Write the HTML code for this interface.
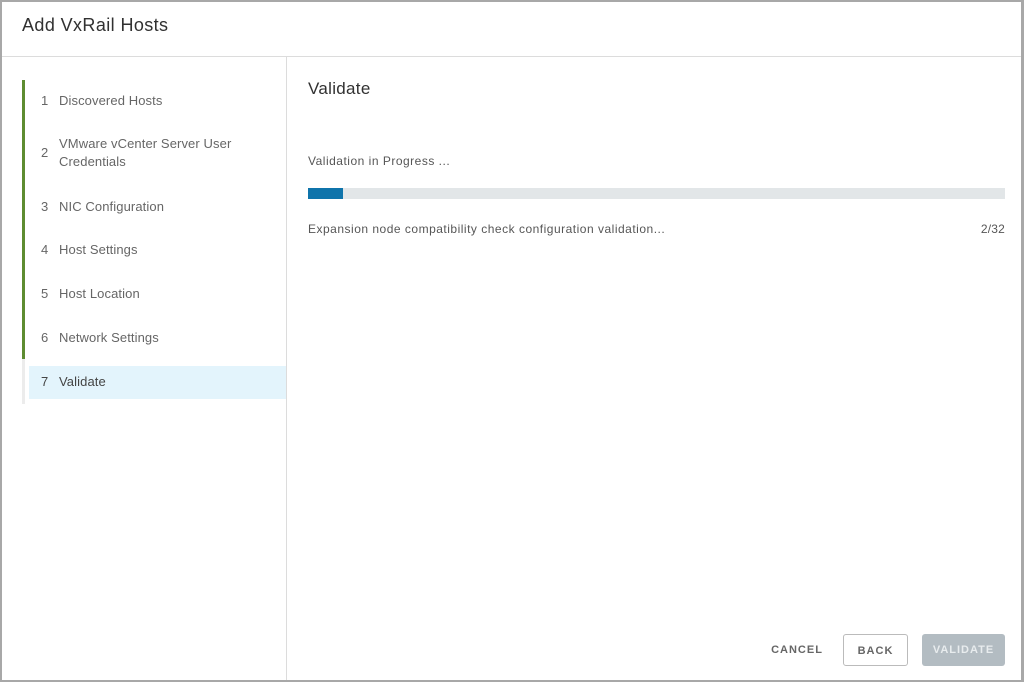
<!DOCTYPE html>
<html><head><style>
*{margin:0;padding:0;box-sizing:border-box}
body{width:1024px;height:682px;background:#fff;font-family:"Liberation Sans",sans-serif;position:relative;overflow:hidden;color:#565656}
.frame{position:absolute;left:0;top:0;width:1024px;height:682px;border:2px solid #a8a8a8;border-right-width:3px}
.hdr{position:absolute;left:2px;top:2px;right:3px;height:55px;border-bottom:1px solid #dcdcdc}
.hdr h1{position:absolute;left:20px;top:13px;font-size:18px;font-weight:normal;color:#313131;letter-spacing:0.4px}
.side{position:absolute;left:2px;top:57px;width:285px;bottom:2px;border-right:1px solid #dcdcdc}
.gbar{position:absolute;left:22px;top:80px;width:3px;height:279px;background:#5e8c31}
.lbar{position:absolute;left:22px;top:359px;width:3px;height:45px;background:#ececec}
.step{position:absolute;left:41px;font-size:13px;color:#666;line-height:18px;letter-spacing:0.1px}
.step span{display:inline-block;width:18px}
.sel{position:absolute;left:29px;top:366px;width:257px;height:33px;background:#e3f4fc}
.main h2{position:absolute;left:308px;top:79px;font-size:17px;font-weight:normal;color:#313131;letter-spacing:0.3px}
.t{position:absolute;font-size:12px;color:#565656;letter-spacing:0.5px}
.bar{position:absolute;left:308px;top:188px;width:697px;height:11px;background:#e2e6e8}
.bar div{width:35px;height:100%;background:#0f74ab}
.btn{position:absolute;top:634px;height:32px;font-size:11px;letter-spacing:1px;font-weight:bold;text-align:center;line-height:32px;border-radius:3px}
</style></head><body>
<div class="hdr"><h1>Add VxRail Hosts</h1></div>
<div class="side"></div>
<div class="gbar"></div><div class="lbar"></div>
<div class="sel"></div>
<div class="step" style="top:92px"><span>1</span>Discovered Hosts</div>
<div class="step" style="top:135px;width:220px"><span style="vertical-align:top;margin-top:9px">2</span><div style="display:inline-block;vertical-align:top">VMware vCenter Server User<br>Credentials</div></div>
<div class="step" style="top:198px"><span>3</span>NIC Configuration</div>
<div class="step" style="top:241px"><span>4</span>Host Settings</div>
<div class="step" style="top:285px"><span>5</span>Host Location</div>
<div class="step" style="top:329px"><span>6</span>Network Settings</div>
<div class="step" style="top:373px;color:#444"><span>7</span>Validate</div>
<div class="main"><h2>Validate</h2></div>
<div class="t" style="left:308px;top:154px">Validation in Progress ...</div>
<div class="bar"><div></div></div>
<div class="t" style="left:308px;top:222px">Expansion node compatibility check configuration validation...</div>
<div class="t" style="right:19px;top:222px;letter-spacing:0.2px">2/32</div>
<div class="btn" style="left:764px;width:66px;color:#666">CANCEL</div>
<div class="btn" style="left:843px;width:65px;border:1px solid #bbb;color:#666">BACK</div>
<div class="btn" style="left:922px;width:83px;background:#b3bcc2;color:#e8ecee">VALIDATE</div>
<div class="frame"></div>
</body></html>
